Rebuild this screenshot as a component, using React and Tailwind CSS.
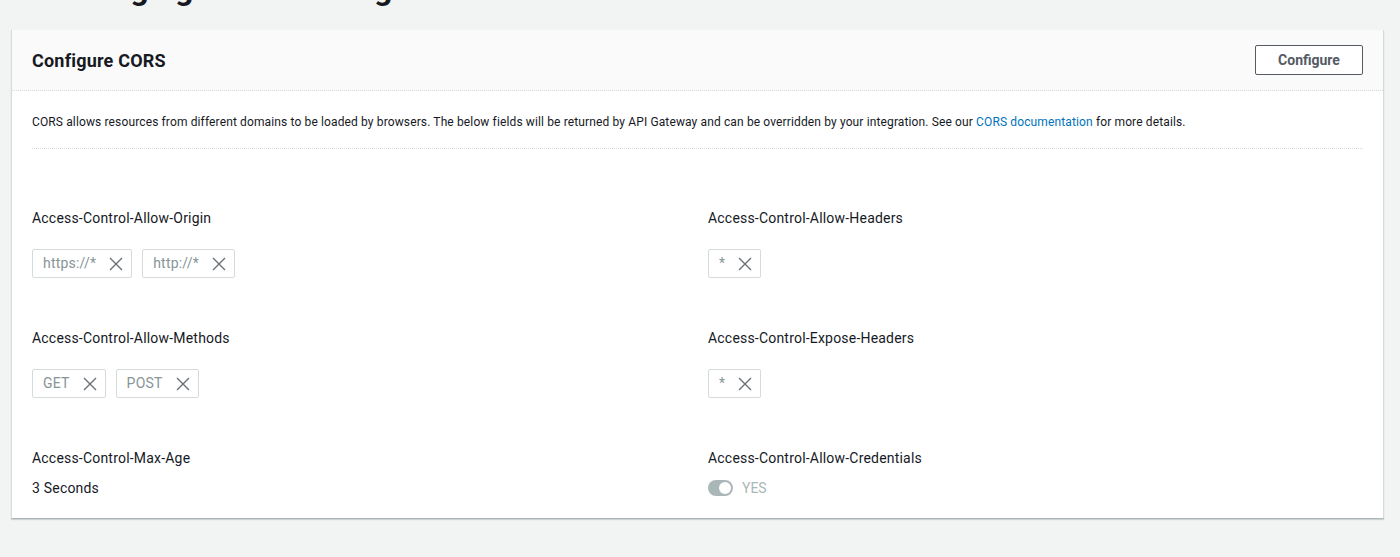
const font = { fontFamily: "Roboto, 'Open Sans', sans-serif" };

function CloseIcon() {
  return (
    <svg width="14" height="14" viewBox="0 0 14 14" className="shrink-0">
      <path d="M1 1 L13 13 M13 1 L1 13" stroke="#687078" strokeWidth="1.4" fill="none" />
    </svg>
  );
}

function Tag({ label }) {
  return (
    <span className="inline-flex h-[29px] items-center gap-[13px] rounded-[2px] border border-[#d5dbdb] bg-white pl-[10px] pr-[8px] text-[14px] tracking-[0.2px] text-[#879596]">
      {label}
      <CloseIcon />
    </span>
  );
}

function Field({ label, children }) {
  return (
    <div className="flex flex-col">
      <div className="text-[14px] leading-[20px] tracking-[0.2px] text-[#16191f]">{label}</div>
      {children}
    </div>
  );
}

export default function App() {
  return (
    <div className="min-h-[557px] bg-[#f2f3f3]" style={font}>
      <div className="h-[30px] overflow-hidden">
        <h1 className="-mt-[30px] pl-[50px] text-[32px] font-bold leading-[38px] text-[#16191f]">
          Managing CORS settings
        </h1>
      </div>
      <div className="ml-[11px] mr-[16px] border-x border-b border-x-[#d5dbdb] border-b-[#aab7b8] bg-white shadow-[0_1px_1px_rgba(0,28,36,0.15)]">
        <div className="flex h-[61px] items-center justify-between border-b border-dotted border-[#d5dbdb] bg-[#fafafa] px-[20px]">
          <h2 className="text-[18px] font-bold tracking-[0.2px] text-[#16191f]">Configure CORS</h2>
          <button className="h-[30px] w-[108px] rounded-[2px] border border-[#545b64] bg-white text-[14px] font-bold text-[#545b64]">
            Configure
          </button>
        </div>
        <div className="px-[20px] pt-[22px] pb-[20px]">
          <p className="pb-[17px] text-[12px] leading-[18px] tracking-[0.13px] text-[#16191f]">
            CORS allows resources from different domains to be loaded by browsers. The below fields will be returned by API
            Gateway and can be overridden by your integration. See our{" "}
            <a className="text-[#0073bb]">CORS documentation</a> for more details.
          </p>
          <div className="border-t border-dotted border-[#d5dbdb]" />
          <div className="mt-[59px] grid grid-cols-[676px_1fr] gap-y-[50px]">
            <Field label="Access-Control-Allow-Origin">
              <div className="mt-[21px] flex gap-[10px]">
                <Tag label="https://*" />
                <Tag label="http://*" />
              </div>
            </Field>
            <Field label="Access-Control-Allow-Headers">
              <div className="mt-[21px] flex gap-[10px]">
                <Tag label="*" />
              </div>
            </Field>
            <Field label="Access-Control-Allow-Methods">
              <div className="mt-[21px] flex gap-[10px]">
                <Tag label="GET" />
                <Tag label="POST" />
              </div>
            </Field>
            <Field label="Access-Control-Expose-Headers">
              <div className="mt-[21px] flex gap-[10px]">
                <Tag label="*" />
              </div>
            </Field>
            <Field label="Access-Control-Max-Age">
              <div className="mt-[10px] text-[14px] leading-[20px] tracking-[0.2px] text-[#16191f]">3 Seconds</div>
            </Field>
            <Field label="Access-Control-Allow-Credentials">
              <div className="mt-[10px] flex h-[20px] items-center gap-[9px]">
                <span className="relative inline-block h-[16px] w-[25px] rounded-full bg-[#aab7b8]">
                  <span className="absolute right-[2px] top-[2px] h-[12px] w-[12px] rounded-full bg-white" />
                </span>
                <span className="text-[14px] text-[#aab7b8]">YES</span>
              </div>
            </Field>
          </div>
        </div>
      </div>
    </div>
  );
}
